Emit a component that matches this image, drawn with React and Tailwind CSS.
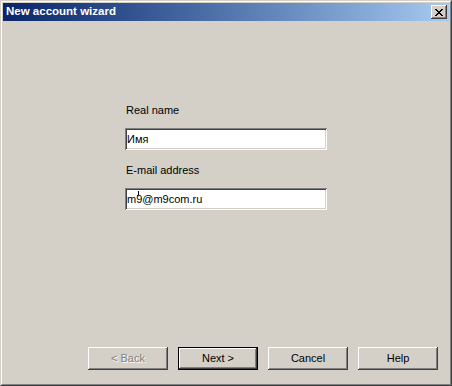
import React from 'react';

const raised =
  'shadow-[inset_-1px_-1px_#404040,inset_1px_1px_#ffffff,inset_-2px_-2px_#808080,inset_2px_2px_#d4d0c8]';
const sunken =
  'shadow-[inset_1px_1px_#808080,inset_-1px_-1px_#ffffff,inset_2px_2px_#404040,inset_-2px_-2px_#d4d0c8]';

const Field = ({ value, children }) => (
  <div className={`relative w-[202px] h-[22px] bg-white ${sunken} flex items-center pl-[2px] text-[11px] text-black`}>
    {value}
    {children}
  </div>
);

const Button = ({ label, disabled, isDefault }) => (
  <div
    className={`w-[80px] h-[23px] flex items-center justify-center text-[11px] bg-[#d4d0c8] ${
      isDefault ? 'border border-black' : ''
    } ${raised} ${disabled ? 'text-[#808080] [text-shadow:1px_1px_#ffffff]' : 'text-black'}`}
  >
    {label}
  </div>
);

export default function App() {
  return (
    <div
      className="w-[452px] h-[386px] bg-[#d4d0c8] border border-t-[#d4d0c8] border-l-[#d4d0c8] border-r-[#404040] border-b-[#404040]"
      style={{ fontFamily: '"Liberation Sans", Arial, sans-serif' }}
    >
      <div className="w-full h-full border border-t-white border-l-white border-r-[#808080] border-b-[#808080] p-px flex flex-col">
        {/* title bar */}
        <div className="h-[18px] flex items-center justify-between bg-gradient-to-r from-[#0a246a] to-[#a6caf0] pl-[3px] pr-[2px]">
          <span className="text-white font-bold text-[11.5px] leading-none">New account wizard</span>
          <div className={`w-[16px] h-[14px] bg-[#d4d0c8] ${raised} flex items-center justify-center`}>
            <svg width="8" height="7" viewBox="0 0 8 7" shapeRendering="crispEdges">
              <path
                d="M0 0h2v1H0zM6 0h2v1H6zM1 1h2v1H1zM5 1h2v1H5zM2 2h4v1H2zM3 3h2v1H3zM2 4h4v1H2zM1 5h2v1H1zM5 5h2v1H5zM0 6h2v1H0zM6 6h2v1H6z"
                fill="#000"
              />
            </svg>
          </div>
        </div>

        {/* body */}
        <div className="flex-1 flex flex-col">
          <div className="pl-[122px] pt-[83px] flex flex-col">
            <div className="text-[11px] leading-[13px] text-black pl-px">Real name</div>
            <div className="mt-[11px]">
              <Field value="Имя" />
            </div>
            <div className="mt-[14px] text-[11px] leading-[13px] text-black pl-px">E-mail address</div>
            <div className="mt-[11px]">
              <Field value="m9@m9com.ru">
                {/* mouse pointer tick */}
                <svg className="absolute left-[12px] top-[3px]" width="3" height="6" viewBox="0 0 3 6" shapeRendering="crispEdges">
                  <path d="M1 0h1v4H1zM0 4h1v1H0z" fill="#000" />
                </svg>
              </Field>
            </div>
          </div>

          <div className="mt-auto pb-[13px] pl-[85px] flex gap-[10px]">
            <Button label="< Back" disabled />
            <Button label="Next >" isDefault />
            <Button label="Cancel" />
            <Button label="Help" />
          </div>
        </div>
      </div>
    </div>
  );
}
